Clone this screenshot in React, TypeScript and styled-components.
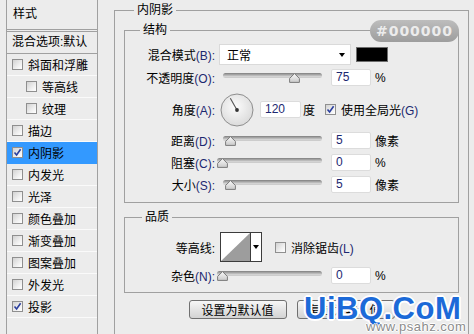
import styled, { createGlobalStyle } from 'styled-components'

const GlobalStyle = createGlobalStyle`
  body {
    margin: 0;
    background: #ececec;
    font-family: 'Liberation Sans', 'Noto Sans CJK SC', sans-serif;
    font-size: 12px;
    color: #000;
    overflow: hidden;
  }
  * { box-sizing: border-box; }
`

const effects = [
  { label: '斜面和浮雕' },
  { label: '等高线', indent: true },
  { label: '纹理', indent: true },
  { label: '描边' },
  { label: '内阴影', checked: true, active: true },
  { label: '内发光' },
  { label: '光泽' },
  { label: '颜色叠加' },
  { label: '渐变叠加' },
  { label: '图案叠加' },
  { label: '外发光' },
  { label: '投影', checked: true },
]

const Check = ({ checked }: { checked?: boolean }) => (
  <CheckBox>
    {checked && (
      <svg width='9' height='9' viewBox='0 0 9 9'>
        <path d='M1.5 4.5 L3.6 7 L7.6 1.2' fill='none' stroke='#2b3f9e' strokeWidth='1.6' />
      </svg>
    )}
  </CheckBox>
)

const Slider = ({ value, lead = 8, width = 99 }: { value: number; lead?: number; width?: number }) => (
  <SliderBox $lead={lead} $width={width}>
    <Track />
    <Thumb style={{ left: Math.round(value * (width - 11)) }} width='11' height='10' viewBox='0 0 11 10'>
      <defs>
        <linearGradient id='tg' x1='0' y1='0' x2='0' y2='1'>
          <stop offset='0' stopColor='#fafafa' />
          <stop offset='1' stopColor='#c9c9c9' />
        </linearGradient>
      </defs>
      <path d='M5.5 0.6 L10.4 5.4 L10.4 9.4 L0.6 9.4 L0.6 5.4 Z' fill='url(#tg)' stroke='#7c7c7c' />
    </Thumb>
  </SliderBox>
)

const Dial = () => (
  <DialSvg width='34' height='34' viewBox='0 0 34 34'>
    <defs>
      <radialGradient id='dg' cx='0.45' cy='0.4' r='0.65'>
        <stop offset='0' stopColor='#fcfcfc' />
        <stop offset='1' stopColor='#d8d8d8' />
      </radialGradient>
    </defs>
    <circle cx='17' cy='17' r='16' fill='url(#dg)' stroke='#8e8e8e' />
    <line x1='17' y1='17' x2='10.3' y2='5.3' stroke='#555' strokeWidth='1.1' />
    <circle cx='17' cy='17' r='1.9' fill='#333' />
  </DialSvg>
)

const App = () => {
  return (
    <>
      <GlobalStyle />
      <Page>
        <SidePanel>
          <PanelTitle>样式</PanelTitle>
          <BlendRow>混合选项:默认</BlendRow>
          {effects.map((e) => (
            <EffectRow key={e.label} $indent={e.indent} $active={e.active}>
              <Check checked={e.checked} />
              {e.label}
            </EffectRow>
          ))}
        </SidePanel>

        <Main>
          <Group $pad='0 9px 30px'>
            <Legend $left={10}>内阴影</Legend>
            <Section>
              <Group $pad='0 0 9px'>
                <Legend $left={15}>结构</Legend>
                <Row $h={21} $mt={4}>
                  <Label>混合模式<Key>(B):</Key></Label>
                  <Select>
                    正常
                    <Caret />
                  </Select>
                  <Swatch />
                </Row>
                <Row $h={17} $mt={4}>
                  <Label>不透明度<Key>(O):</Key></Label>
                  <Slider value={0.75} />
                  <Field>75</Field>
                  <Unit>%</Unit>
                </Row>
                <Row $h={35} $mt={6}>
                  <Label>角度<Key>(A):</Key></Label>
                  <Dial />
                  <Field $ml={6} $w={41}>120</Field>
                  <Unit $ml={2}>度</Unit>
                  <CheckLabel $ml={10}>
                    <Check checked />
                    <span>使用全局光<Key>(G)</Key></span>
                  </CheckLabel>
                </Row>
                <Row $h={17} $mt={5}>
                  <Label>距离<Key>(D):</Key></Label>
                  <Slider value={0.02} />
                  <Field>5</Field>
                  <Unit>像素</Unit>
                </Row>
                <Row $h={17} $mt={5}>
                  <Label>阻塞<Key>(C):</Key></Label>
                  <Slider value={0} lead={2} width={105} />
                  <Field>0</Field>
                  <Unit>%</Unit>
                </Row>
                <Row $h={17} $mt={5}>
                  <Label>大小<Key>(S):</Key></Label>
                  <Slider value={0.02} />
                  <Field>5</Field>
                  <Unit>像素</Unit>
                </Row>
              </Group>
              <Badge>#000000</Badge>
            </Section>

            <Group $pad='0 0 8px' $mt={4}>
              <Legend $left={17}>品质</Legend>
              <Row $h={30} $mt={5}>
                <Label>等高线:</Label>
                <Contour>
                  <svg width='29' height='28' viewBox='0 0 29 28'>
                    <rect width='29' height='28' fill='#fff' />
                    <path d='M0 28 L29 0 L29 28 Z' fill='#9d9d9d' />
                  </svg>
                  <ContourArrow>
                    <Caret />
                  </ContourArrow>
                </Contour>
                <CheckLabel $ml={13}>
                  <Check />
                  <span>消除锯齿<Key>(L)</Key></span>
                </CheckLabel>
              </Row>
              <Row $h={17} $mt={5}>
                <Label>杂色<Key>(N):</Key></Label>
                <Slider value={0} lead={2} width={105} />
                <Field>0</Field>
                <Unit>%</Unit>
              </Row>
            </Group>

            <Buttons>
              <Button>设置为默认值</Button>
              <Button>复位为默认值</Button>
            </Buttons>
          </Group>
        </Main>

        <Watermark>UiBQ.CoM</Watermark>
        <WatermarkSite>www.psahz.com</WatermarkSite>
      </Page>
    </>
  )
}

export default App

const Page = styled.div`
  position: relative;
  width: 474px;
  height: 334px;
  overflow: hidden;
  display: flex;
  align-items: flex-start;
  gap: 16px;
  padding-left: 6px;
`

const SidePanel = styled.div`
  width: 92px;
  min-height: 340px;
  flex-shrink: 0;
  border-left: 1px solid #a0a0a0;
  border-right: 1px solid #a0a0a0;
`

const PanelTitle = styled.div`
  height: 32px;
  line-height: 29px;
  padding-left: 6px;
  border-bottom: 3px double #a0a0a0;
`

const BlendRow = styled.div`
  height: 22px;
  line-height: 21px;
  padding-left: 5px;
  border-bottom: 1px solid #a0a0a0;
  white-space: nowrap;
`

const EffectRow = styled.div<{ $indent?: boolean; $active?: boolean }>`
  height: 22px;
  display: flex;
  align-items: center;
  gap: 5px;
  padding-left: ${(p) => (p.$indent ? 19 : 5)}px;
  border-bottom: 1px solid ${(p) => (p.$active ? '#3399ff' : '#fafafa')};
  background: ${(p) => (p.$active ? '#3399ff' : 'transparent')};
  white-space: nowrap;
`

const CheckBox = styled.span`
  width: 11px;
  height: 11px;
  flex-shrink: 0;
  display: flex;
  align-items: center;
  justify-content: center;
  border: 1px solid #8f8f8f;
  background: linear-gradient(135deg, #d2d2d2, #f4f4f4 70%, #fff);
`

const Main = styled.div`
  width: 355px;
  flex-shrink: 0;
`

const Group = styled.fieldset<{ $pad: string; $mt?: number }>`
  margin: ${(p) => p.$mt ?? 0}px 0 0;
  padding: ${(p) => p.$pad};
  min-width: 0;
  border: 1px solid #a0a0a0;
`

const Legend = styled.legend<{ $left: number }>`
  margin-left: ${(p) => p.$left}px;
  padding: 0 3px;
  height: 20px;
  line-height: 20px;
`

const Section = styled.div`
  position: relative;
`

const Badge = styled.div`
  position: absolute;
  top: 0;
  right: 0;
  width: 89px;
  height: 22px;
  border-radius: 11px;
  background: linear-gradient(#bdbdbd, #9d9d9d);
  color: #ececec;
  font-family: 'DejaVu Sans', sans-serif;
  font-weight: bold;
  font-size: 14px;
  letter-spacing: 1px;
  line-height: 22px;
  text-align: center;
`

const Row = styled.div<{ $h: number; $mt: number }>`
  display: flex;
  align-items: center;
  height: ${(p) => p.$h}px;
  margin-top: ${(p) => p.$mt}px;
  white-space: nowrap;
`

const Label = styled.div`
  width: 90px;
  flex-shrink: 0;
  text-align: right;
`

const Key = styled.span`
  color: #1c2870;
`

const Select = styled.div`
  margin-left: 4px;
  width: 132px;
  height: 21px;
  display: flex;
  align-items: center;
  justify-content: space-between;
  padding: 0 5px 0 7px;
  background: #fff;
  border: 1px solid #dadada;
`

const Caret = styled.span`
  width: 0;
  height: 0;
  border-left: 3.5px solid transparent;
  border-right: 3.5px solid transparent;
  border-top: 4px solid #000;
`

const Swatch = styled.div`
  margin-left: 5px;
  width: 32px;
  height: 15px;
  background: #000;
  border: 1px solid #6e6e6e;
`

const SliderBox = styled.div<{ $lead: number; $width: number }>`
  position: relative;
  margin-left: ${(p) => p.$lead}px;
  width: ${(p) => p.$width}px;
  height: 17px;
`

const Track = styled.div`
  margin-top: 4px;
  height: 5px;
  border-radius: 3px;
  background: linear-gradient(#7e7e7e, #a8a8a8 35%, #d8d8d8 75%, #c4c4c4);
`

const Thumb = styled.svg`
  position: absolute;
  top: 4px;
`

const Field = styled.div<{ $ml?: number; $w?: number }>`
  margin-left: ${(p) => p.$ml ?? 9}px;
  width: ${(p) => p.$w ?? 40}px;
  height: 17px;
  line-height: 15px;
  padding-left: 4px;
  background: #fff;
  border: 1px solid #dcdcdc;
  border-radius: 2px;
  color: #1c2870;
`

const Unit = styled.span<{ $ml?: number }>`
  margin-left: ${(p) => p.$ml ?? 4}px;
`

const DialSvg = styled.svg`
  margin-left: 5px;
  flex-shrink: 0;
`

const CheckLabel = styled.div<{ $ml: number }>`
  margin-left: ${(p) => p.$ml}px;
  display: flex;
  align-items: center;
  gap: 5px;
`

const Contour = styled.div`
  margin-left: 5px;
  width: 42px;
  height: 30px;
  display: flex;
  border: 1px solid #3c3c3c;
  background: #fff;
`

const ContourArrow = styled.div`
  flex: 1;
  display: flex;
  align-items: center;
  justify-content: center;
  border-left: 1px solid #3c3c3c;
`

const Buttons = styled.div`
  margin-top: 7px;
  display: flex;
  justify-content: center;
  gap: 10px;
`

const Button = styled.button`
  width: 98px;
  height: 19px;
  padding: 0;
  border: 1px solid #707070;
  border-radius: 3px;
  background: linear-gradient(#f7f7f7, #e4e4e4 50%, #d3d3d3);
  font-family: 'Liberation Sans', 'Noto Sans CJK SC', sans-serif;
  font-size: 12px;
  color: #000;
`

const Watermark = styled.div`
  position: absolute;
  left: 304px;
  top: 293px;
  font-family: 'Liberation Sans', sans-serif;
  font-weight: bold;
  font-size: 31px;
  line-height: 31px;
  letter-spacing: 0.5px;
  color: #1c6ad8;
  text-shadow: 2px 0 #fff, -2px 0 #fff, 0 2px #fff, 0 -2px #fff, 1px 1px #fff, -1px -1px #fff, 1px -1px #fff, -1px 1px #fff;
`

const WatermarkSite = styled.div`
  position: absolute;
  left: 366px;
  top: 320px;
  font-family: 'Liberation Sans', sans-serif;
  font-size: 13px;
  line-height: 14px;
  letter-spacing: 0.5px;
  color: #8c8c8c;
  text-shadow: 1px 0 #fff, -1px 0 #fff, 0 1px #fff, 0 -1px #fff;
`
